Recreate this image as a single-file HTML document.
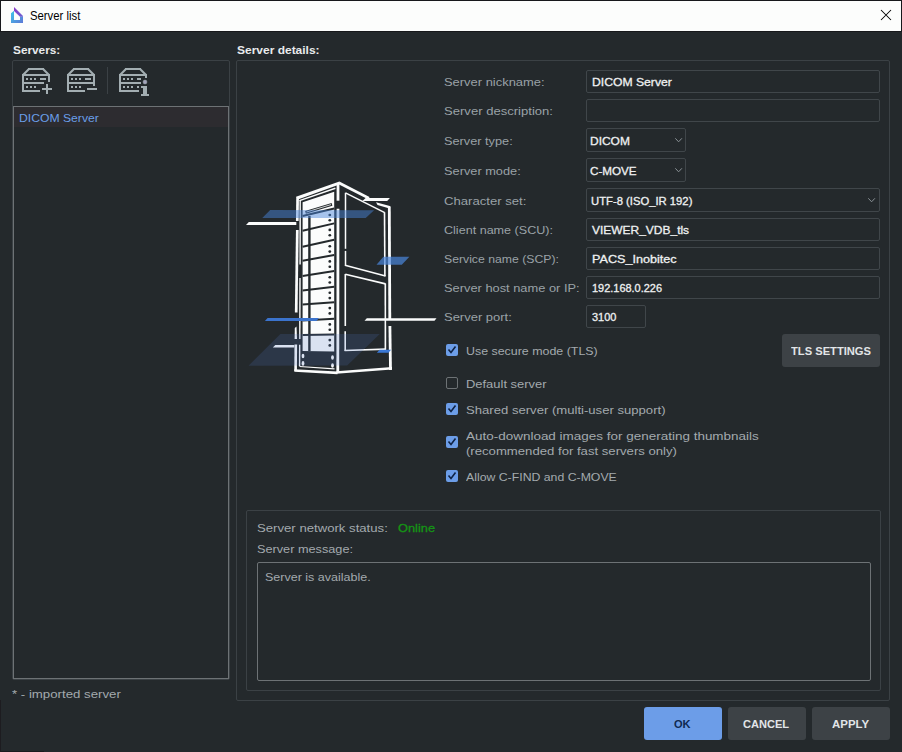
<!DOCTYPE html>
<html><head><meta charset="utf-8"><style>
html,body{margin:0;padding:0;}
body{width:902px;height:752px;position:relative;overflow:hidden;background:#24292c;font-family:'Liberation Sans', sans-serif;}
.a{position:absolute;box-sizing:border-box;}
.t{position:absolute;line-height:20px;height:20px;white-space:pre;transform-origin:0 0;}
</style></head><body>
<!-- title bar -->
<div class="a" style="left:0;top:0;width:902px;height:32px;background:#17181b"></div>
<div class="a" style="left:1px;top:1px;width:900px;height:30px;background:#fcfdfc"></div>
<svg class="a" style="left:0;top:0" width="40" height="32" viewBox="0 0 40 32">
<defs><linearGradient id="lg1" x1="0" y1="0" x2="1" y2="1"><stop offset="0" stop-color="#3ec6ea"/><stop offset="1" stop-color="#5d78d6"/></linearGradient>
<linearGradient id="lg2" x1="0" y1="0" x2="1" y2="1"><stop offset="0" stop-color="#8a38c6"/><stop offset="1" stop-color="#6a62d2"/></linearGradient></defs>
<path d="M11 23 L11 13.3 L14 10.8 L14 20 L20 20 L20 16.8 L23 16.8 L23 23 Z" fill="url(#lg1)"/>
<path d="M14 7 L23 16 L23 16.8 L20 16.8 L14 11 Z" fill="url(#lg2)"/>
</svg>
<svg class="a" style="left:876px;top:5px" width="20" height="20" viewBox="0 0 20 20">
<path d="M5 5 L15 15 M15 5 L5 15" stroke="#000" stroke-width="1.05"/>
</svg>

<div class="a" style="left:0;top:751px;width:44px;height:1px;background:#1a1a1e"></div>
<div class="a" style="left:0;top:700px;width:1px;height:52px;background:#1d1c20"></div>
<!-- left panel -->
<div class="a" style="left:12px;top:60px;width:218px;height:620px;border:1px solid #3b4145;border-radius:2px"></div>
<div class="a" style="left:13px;top:106px;width:216px;height:573px;border:1px solid #6d7275;border-top-width:2px"></div>
<div class="a" style="left:14px;top:107px;width:214px;height:20px;background:#2d2c30"></div>
<div class="a" style="left:107px;top:67px;width:1px;height:27px;background:#3b4145"></div>
<svg class="a" style="left:0;top:0" width="170" height="100" viewBox="0 0 170 100"><rect x="22" y="74" width="2" height="18" fill="#a3aeb2"/><rect x="28" y="68" width="16" height="2" fill="#a3aeb2"/><path d="M22.7 75.3 L28.7 69.3 M49.3 75.3 L43.3 69.3" stroke="#a3aeb2" stroke-width="2" fill="none"/><rect x="22" y="74" width="28" height="2" fill="#a3aeb2"/><rect x="48" y="74" width="2" height="8" fill="#a3aeb2"/><rect x="26" y="78" width="2" height="2" fill="#a3aeb2"/><rect x="26" y="86" width="2" height="2" fill="#a3aeb2"/><rect x="30" y="78" width="2" height="2" fill="#a3aeb2"/><rect x="30" y="86" width="2" height="2" fill="#a3aeb2"/><rect x="34" y="78" width="2" height="2" fill="#a3aeb2"/><rect x="34" y="86" width="2" height="2" fill="#a3aeb2"/><rect x="40" y="78" width="6" height="2" fill="#a3aeb2"/><rect x="23" y="82" width="21" height="2" fill="#a3aeb2"/><rect x="22" y="90" width="18" height="2" fill="#a3aeb2"/><rect x="42" y="88" width="10" height="2" fill="#a3aeb2"/><rect x="46" y="84" width="2" height="10" fill="#a3aeb2"/><rect x="67" y="74" width="2" height="18" fill="#a3aeb2"/><rect x="73" y="68" width="16" height="2" fill="#a3aeb2"/><path d="M67.7 75.3 L73.7 69.3 M94.3 75.3 L88.3 69.3" stroke="#a3aeb2" stroke-width="2" fill="none"/><rect x="67" y="74" width="28" height="2" fill="#a3aeb2"/><rect x="93" y="74" width="2" height="12" fill="#a3aeb2"/><rect x="71" y="78" width="2" height="2" fill="#a3aeb2"/><rect x="71" y="86" width="2" height="2" fill="#a3aeb2"/><rect x="75" y="78" width="2" height="2" fill="#a3aeb2"/><rect x="75" y="86" width="2" height="2" fill="#a3aeb2"/><rect x="79" y="78" width="2" height="2" fill="#a3aeb2"/><rect x="79" y="86" width="2" height="2" fill="#a3aeb2"/><rect x="85" y="78" width="6" height="2" fill="#a3aeb2"/><rect x="68" y="82" width="26" height="2" fill="#a3aeb2"/><rect x="67" y="90" width="18" height="2" fill="#a3aeb2"/><rect x="87" y="88" width="10" height="2" fill="#a3aeb2"/><rect x="119" y="74" width="2" height="18" fill="#a3aeb2"/><rect x="125" y="68" width="16" height="2" fill="#a3aeb2"/><path d="M119.7 75.3 L125.7 69.3 M146.3 75.3 L140.3 69.3" stroke="#a3aeb2" stroke-width="2" fill="none"/><rect x="119" y="74" width="28" height="2" fill="#a3aeb2"/><rect x="145" y="74" width="2" height="4" fill="#a3aeb2"/><rect x="123" y="78" width="2" height="2" fill="#a3aeb2"/><rect x="123" y="86" width="2" height="2" fill="#a3aeb2"/><rect x="127" y="78" width="2" height="2" fill="#a3aeb2"/><rect x="127" y="86" width="2" height="2" fill="#a3aeb2"/><rect x="131" y="78" width="2" height="2" fill="#a3aeb2"/><rect x="131" y="86" width="2" height="2" fill="#a3aeb2"/><rect x="137" y="78" width="4" height="2" fill="#a3aeb2"/><rect x="137" y="86" width="2" height="2" fill="#a3aeb2"/><rect x="120" y="82" width="21" height="2" fill="#a3aeb2"/><rect x="119" y="90" width="20" height="2" fill="#a3aeb2"/><rect x="143" y="86" width="4" height="9" fill="#a3aeb2"/><rect x="141" y="86" width="2" height="2" fill="#a3aeb2"/><rect x="141" y="94" width="8" height="2" fill="#a3aeb2"/><circle cx="145" cy="82" r="1.9" fill="#a4a3bd" stroke="#a3aeb2" stroke-width="0.6"/></svg>

<!-- details box -->
<div class="a" style="left:236px;top:60px;width:654px;height:641px;border:1px solid #3b4145;border-radius:2px"></div>
<!-- inputs -->
<div class="a" style="left:586px;top:70px;width:294px;height:23px;border:1px solid #40464a;border-radius:2px"></div>
<div class="a" style="left:586px;top:99px;width:294px;height:23px;border:1px solid #40464a;border-radius:2px"></div>
<div class="a" style="left:586px;top:128px;width:100px;height:24px;border:1px solid #40464a;border-radius:2px"></div>
<div class="a" style="left:586px;top:158px;width:100px;height:24px;border:1px solid #40464a;border-radius:2px"></div>
<div class="a" style="left:586px;top:188px;width:294px;height:24px;border:1px solid #40464a;border-radius:2px"></div>
<div class="a" style="left:586px;top:218px;width:294px;height:23px;border:1px solid #40464a;border-radius:2px"></div>
<div class="a" style="left:586px;top:247px;width:294px;height:23px;border:1px solid #40464a;border-radius:2px"></div>
<div class="a" style="left:586px;top:276px;width:294px;height:23px;border:1px solid #40464a;border-radius:2px"></div>
<div class="a" style="left:586px;top:305px;width:60px;height:23px;border:1px solid #40464a;border-radius:2px"></div>
<svg class="a" style="left:0;top:0" width="902" height="752" viewBox="0 0 902 752" fill="none" stroke="#8a9196" stroke-width="1">
  <path d="M675.3 138.3 L678.6 141.8 L681.9 138.3"/>
  <path d="M675.3 168.3 L678.6 171.8 L681.9 168.3"/>
  <path d="M868.3 198.3 L871.6 201.8 L874.9 198.3"/>
</svg>

<!-- checkboxes -->
<div class="a" style="left:446px;top:344px;width:12px;height:12px;background:#6c9de8;border-radius:2px"></div>
<div class="a" style="left:446px;top:377px;width:12px;height:12px;border:1px solid #6d7275;border-radius:2px"></div>
<div class="a" style="left:446px;top:403px;width:12px;height:12px;background:#6c9de8;border-radius:2px"></div>
<div class="a" style="left:446px;top:436px;width:12px;height:12px;background:#6c9de8;border-radius:2px"></div>
<div class="a" style="left:446px;top:470px;width:12px;height:12px;background:#6c9de8;border-radius:2px"></div>
<svg class="a" style="left:0;top:0" width="902" height="752" viewBox="0 0 902 752" fill="none" stroke="#0f2345" stroke-width="1.6">
  <path d="M448.5 349.5 L451 352.5 L455.5 346.5"/>
  <path d="M448.5 408.5 L451 411.5 L455.5 405.5"/>
  <path d="M448.5 441.5 L451 444.5 L455.5 438.5"/>
  <path d="M448.5 475.5 L451 478.5 L455.5 472.5"/>
</svg>

<!-- TLS button -->
<div class="a" style="left:782px;top:334px;width:98px;height:33px;background:#3d4246;border-radius:3px"></div>

<!-- status box -->
<div class="a" style="left:246px;top:510px;width:635px;height:181px;border:1px solid #3b4145;border-radius:2px"></div>
<div class="a" style="left:257px;top:562px;width:614px;height:119px;border:1px solid #6d7275;border-radius:2px"></div>

<!-- buttons -->
<div class="a" style="left:644px;top:707px;width:78px;height:33px;background:#6c9de8;border-radius:3px"></div>
<div class="a" style="left:728px;top:707px;width:78px;height:33px;background:#3d4246;border-radius:3px"></div>
<div class="a" style="left:812px;top:707px;width:78px;height:33px;background:#3d4246;border-radius:3px"></div>

<!-- illustration -->
<svg class="a" style="left:0;top:0" width="902" height="752" viewBox="0 0 902 752">
<polygon points="302.6,202.3 334.2,191.8 334.2,351.5 302.6,351.0" fill="#fbfcfc" />
<polygon points="302.6,351.8 334.2,352.3 334.2,370.0 302.6,368.0" fill="#24292c" />
<line x1="302.6" y1="216" x2="334.2" y2="208.5" stroke="#24292c" stroke-width="2.0" />
<line x1="302.6" y1="230.7" x2="334.2" y2="223.4" stroke="#24292c" stroke-width="2.0" />
<line x1="302.6" y1="246.8" x2="334.2" y2="239.8" stroke="#24292c" stroke-width="2.0" />
<line x1="302.6" y1="260.7" x2="334.2" y2="255.1" stroke="#24292c" stroke-width="2.0" />
<line x1="302.6" y1="276.1" x2="334.2" y2="271" stroke="#24292c" stroke-width="2.0" />
<line x1="302.6" y1="290.5" x2="334.2" y2="286.8" stroke="#24292c" stroke-width="2.0" />
<line x1="302.6" y1="304.6" x2="334.2" y2="302.3" stroke="#24292c" stroke-width="2.0" />
<line x1="302.6" y1="320.4" x2="334.2" y2="318.7" stroke="#24292c" stroke-width="2.0" />
<line x1="302.6" y1="335.1" x2="334.2" y2="334.5" stroke="#24292c" stroke-width="2.0" />
<line x1="309.4" y1="216" x2="309.4" y2="351" stroke="#24292c" stroke-width="2.4" />
<line x1="305.5" y1="212.3" x2="332" y2="204.3" stroke="#24292c" stroke-width="2.8" />
<line x1="306.5" y1="212" x2="331" y2="204.6" stroke="#fbfcfc" stroke-width="0.8" />
<ellipse cx="329.8" cy="215.0" rx="1.4" ry="1.3" fill="#24292c"/>
<ellipse cx="329.8" cy="220.3" rx="1.4" ry="1.3" fill="#24292c"/>
<ellipse cx="329.8" cy="229.9" rx="1.4" ry="1.3" fill="#24292c"/>
<ellipse cx="329.8" cy="235.2" rx="1.4" ry="1.3" fill="#24292c"/>
<ellipse cx="329.8" cy="246.3" rx="1.4" ry="1.3" fill="#24292c"/>
<ellipse cx="329.8" cy="251.6" rx="1.4" ry="1.3" fill="#24292c"/>
<ellipse cx="329.8" cy="261.4" rx="1.4" ry="1.3" fill="#24292c"/>
<ellipse cx="329.8" cy="266.7" rx="1.4" ry="1.3" fill="#24292c"/>
<ellipse cx="329.8" cy="277.2" rx="1.4" ry="1.3" fill="#24292c"/>
<ellipse cx="329.8" cy="282.5" rx="1.4" ry="1.3" fill="#24292c"/>
<ellipse cx="329.8" cy="292.8" rx="1.4" ry="1.3" fill="#24292c"/>
<ellipse cx="329.8" cy="298.1" rx="1.4" ry="1.3" fill="#24292c"/>
<ellipse cx="329.8" cy="308.1" rx="1.4" ry="1.3" fill="#24292c"/>
<ellipse cx="329.8" cy="313.4" rx="1.4" ry="1.3" fill="#24292c"/>
<ellipse cx="329.8" cy="324.4" rx="1.4" ry="1.3" fill="#24292c"/>
<ellipse cx="329.8" cy="329.7" rx="1.4" ry="1.3" fill="#24292c"/>
<ellipse cx="329.8" cy="340.1" rx="1.4" ry="1.3" fill="#24292c"/>
<ellipse cx="329.8" cy="345.4" rx="1.4" ry="1.3" fill="#24292c"/>
<ellipse cx="303" cy="356" rx="1.4" ry="2.3" fill="#fbfcfc"/>
<ellipse cx="303" cy="363.4" rx="1.4" ry="2.3" fill="#fbfcfc"/>
<ellipse cx="332.5" cy="357.5" rx="1.4" ry="2.3" fill="#fbfcfc"/>
<ellipse cx="332.5" cy="365.5" rx="1.4" ry="2.3" fill="#fbfcfc"/>
<polygon points="296.0,196.8 339.4,181.4 339.4,184.4 298.6,199.2" fill="#fbfcfc" />
<line x1="297.6" y1="197" x2="297.3" y2="221.1" stroke="#fbfcfc" stroke-width="2.7" />
<line x1="297.3" y1="229.9" x2="296.2" y2="312.6" stroke="#fbfcfc" stroke-width="2.7" />
<polygon points="294.6,339.0 294.8,328.0 296.5,326.4 297.0,339.0" fill="#fbfcfc" />
<line x1="295.8" y1="344.6" x2="295.6" y2="371" stroke="#fbfcfc" stroke-width="2.6" />
<line x1="300.2" y1="200" x2="300.1" y2="264.5" stroke="#fbfcfc" stroke-width="1.4" />
<line x1="300" y1="278" x2="299.8" y2="339" stroke="#fbfcfc" stroke-width="1.4" />
<line x1="299.7" y1="344.7" x2="299.6" y2="366.2" stroke="#fbfcfc" stroke-width="1.4" />
<line x1="299.5" y1="200.6" x2="335.4" y2="188.3" stroke="#fbfcfc" stroke-width="1.5" />
<line x1="338" y1="183" x2="338" y2="200.7" stroke="#fbfcfc" stroke-width="2.8" />
<line x1="338" y1="208.7" x2="337.8" y2="373" stroke="#fbfcfc" stroke-width="2.8" />
<polygon points="294.3,369.3 337.5,371.6 337.5,374.2 294.3,371.8" fill="#fbfcfc" />
<polygon points="336.5,371.2 392.0,367.0 392.0,369.6 336.5,373.8" fill="#fbfcfc" />
<line x1="299.6" y1="366.5" x2="334.5" y2="368.8" stroke="#fbfcfc" stroke-width="1.2" />
<polygon points="339.4,181.4 369.5,197.0 368.5,199.4 338.5,184.2" fill="#fbfcfc" />
<polygon points="362.5,201.1 365.6,198.0 389.9,198.0 387.2,201.1" fill="#fbfcfc" />
<polygon points="376.0,202.3 390.7,206.2 389.5,208.6 377.5,205.0" fill="#fbfcfc" />
<line x1="389.3" y1="207" x2="389.8" y2="320" stroke="#fbfcfc" stroke-width="2.8" />
<line x1="389.9" y1="326" x2="390.5" y2="370" stroke="#fbfcfc" stroke-width="2.8" />
<line x1="345.5" y1="192.8" x2="345.5" y2="248.8" stroke="#fbfcfc" stroke-width="1.5" />
<line x1="345.5" y1="250.9" x2="345.5" y2="266" stroke="#fbfcfc" stroke-width="1.5" />
<line x1="345.5" y1="192.8" x2="384.7" y2="212.7" stroke="#fbfcfc" stroke-width="1.5" />
<line x1="384.5" y1="212.2" x2="384.9" y2="276.3" stroke="#fbfcfc" stroke-width="1.6" />
<line x1="345" y1="265.3" x2="385.5" y2="276" stroke="#fbfcfc" stroke-width="1.6" />
<line x1="345.3" y1="274.3" x2="385.5" y2="283.9" stroke="#fbfcfc" stroke-width="1.6" />
<line x1="345.3" y1="274" x2="345.3" y2="326" stroke="#fbfcfc" stroke-width="1.6" />
<line x1="345.2" y1="331.2" x2="345.2" y2="351" stroke="#fbfcfc" stroke-width="1.6" />
<line x1="385.3" y1="283.6" x2="385.4" y2="349.8" stroke="#fbfcfc" stroke-width="1.6" />
<line x1="344.6" y1="350.5" x2="386" y2="349.2" stroke="#fbfcfc" stroke-width="1.7" />
<polygon points="246.0,225.1 248.8,222.0 296.3,222.0 296.3,225.1" fill="#fbfcfc" />
<polygon points="272.8,347.4 275.3,345.0 294.3,345.0 294.3,347.4" fill="#fbfcfc" />
<polygon points="364.5,320.8 366.8,318.3 436.5,318.3 434.5,320.8" fill="#fbfcfc" />
<polygon points="262.3,218.0 270.2,210.0 374.1,210.2 365.7,218.0" fill="#4a86dc" fill-opacity="0.48"/>
<polygon points="376.5,264.7 383.4,256.7 409.4,256.8 401.8,264.8" fill="#4a86dc" fill-opacity="0.7"/>
<polygon points="264.9,320.9 267.6,318.0 319.0,318.0 316.5,320.9" fill="#3b73cc" />
<polygon points="376.9,352.7 379.7,349.8 391.0,349.8 388.5,352.7" fill="#3a78d6" />
<polygon points="248.5,365.8 280.4,334.0 379.8,333.9 347.2,365.6" fill="#5276c5" fill-opacity="0.19"/>

</svg>

<div class="t" style="left:30.0px;top:6.0px;font-size:12px;color:#000000;transform:scaleX(0.9429);">Server list</div><div class="t" style="left:12.8px;top:40.3px;font-size:11.4px;font-weight:bold;color:#e9ebec;transform:scaleX(1.0371);">Servers:</div><div class="t" style="left:237.0px;top:40.2px;font-size:11.4px;font-weight:bold;color:#e9ebec;transform:scaleX(1.0520);">Server details:</div><div class="t" style="left:19.0px;top:108.0px;font-size:11.3px;color:#6a9fe9;transform:scaleX(1.0772);">DICOM Server</div><div class="t" style="left:444.0px;top:72.0px;font-size:11.3px;color:#9aa2a7;transform:scaleX(1.1444);">Server nickname:</div><div class="t" style="left:444.0px;top:101.0px;font-size:11.3px;color:#9aa2a7;transform:scaleX(1.1573);">Server description:</div><div class="t" style="left:444.0px;top:131.0px;font-size:11.3px;color:#9aa2a7;transform:scaleX(1.1280);">Server type:</div><div class="t" style="left:444.0px;top:161.0px;font-size:11.3px;color:#9aa2a7;transform:scaleX(1.1311);">Server mode:</div><div class="t" style="left:444.0px;top:191.0px;font-size:11.3px;color:#9aa2a7;transform:scaleX(1.1613);">Character set:</div><div class="t" style="left:444.0px;top:220.0px;font-size:11.3px;color:#9aa2a7;transform:scaleX(1.1130);">Client name (SCU):</div><div class="t" style="left:444.0px;top:249.0px;font-size:11.3px;color:#9aa2a7;transform:scaleX(1.0828);">Service name (SCP):</div><div class="t" style="left:444.0px;top:278.0px;font-size:11.3px;color:#9aa2a7;transform:scaleX(1.1367);">Server host name or IP:</div><div class="t" style="left:444.0px;top:307.0px;font-size:11.3px;color:#9aa2a7;transform:scaleX(1.1485);">Server port:</div><div class="t" style="left:592.3px;top:72.0px;font-size:11px;color:#eef0f1;transform:scaleX(1.1064);-webkit-text-stroke:0.3px #eef0f1;">DICOM Server</div><div class="t" style="left:590.3px;top:131.0px;font-size:11px;color:#eef0f1;transform:scaleX(1.0880);-webkit-text-stroke:0.3px #eef0f1;">DICOM</div><div class="t" style="left:590.3px;top:161.0px;font-size:11px;color:#eef0f1;transform:scaleX(1.0591);-webkit-text-stroke:0.3px #eef0f1;">C-MOVE</div><div class="t" style="left:590.6px;top:190.5px;font-size:11px;color:#eef0f1;transform:scaleX(1.0239);-webkit-text-stroke:0.3px #eef0f1;">UTF-8 (ISO_IR 192)</div><div class="t" style="left:592.3px;top:220.0px;font-size:11px;color:#eef0f1;transform:scaleX(1.0880);-webkit-text-stroke:0.3px #eef0f1;">VIEWER_VDB_tls</div><div class="t" style="left:592.3px;top:249.0px;font-size:11px;color:#eef0f1;transform:scaleX(1.1477);-webkit-text-stroke:0.3px #eef0f1;">PACS_Inobitec</div><div class="t" style="left:591.9px;top:278.0px;font-size:11px;color:#eef0f1;transform:scaleX(0.9949);-webkit-text-stroke:0.3px #eef0f1;">192.168.0.226</div><div class="t" style="left:591.8px;top:306.5px;font-size:11px;color:#eef0f1;transform:scaleX(0.9966);-webkit-text-stroke:0.3px #eef0f1;">3100</div><div class="t" style="left:466.2px;top:341.0px;font-size:11.3px;color:#a3aaae;transform:scaleX(1.0982);">Use secure mode (TLS)</div><div class="t" style="left:466.2px;top:374.0px;font-size:11.3px;color:#a3aaae;transform:scaleX(1.1446);">Default server</div><div class="t" style="left:466.2px;top:400.0px;font-size:11.3px;color:#a3aaae;transform:scaleX(1.1597);">Shared server (multi-user support)</div><div class="t" style="left:466.2px;top:426.0px;font-size:11.3px;color:#a3aaae;transform:scaleX(1.1924);">Auto-download images for generating thumbnails</div><div class="t" style="left:466.2px;top:441.0px;font-size:11.3px;color:#a3aaae;transform:scaleX(1.1628);">(recommended for fast servers only)</div><div class="t" style="left:466.2px;top:467.0px;font-size:11.3px;color:#a3aaae;transform:scaleX(1.0870);">Allow C-FIND and C-MOVE</div><div class="t" style="left:791.0px;top:341.0px;font-size:11.2px;font-weight:bold;color:#e2e5e8;transform:scaleX(0.9977);">TLS SETTINGS</div><div class="t" style="left:257.1px;top:518.0px;font-size:11.3px;color:#a3aaae;transform:scaleX(1.1638);">Server network status:</div><div class="t" style="left:397.5px;top:518.0px;font-size:11.3px;color:#159515;transform:scaleX(1.1330);-webkit-text-stroke:0.3px #159515;">Online</div><div class="t" style="left:257.1px;top:539.0px;font-size:11.3px;color:#a3aaae;transform:scaleX(1.1242);">Server message:</div><div class="t" style="left:265.1px;top:567.0px;font-size:11.3px;color:#a3aaae;transform:scaleX(1.1073);">Server is available.</div><div class="t" style="left:11.6px;top:683.5px;font-size:11.3px;color:#a3aaae;transform:scaleX(1.1709);">* - imported server</div><div class="t" style="left:674.4px;top:714.0px;font-size:11.2px;font-weight:bold;color:#0f2a52;transform:scaleX(0.9892);">OK</div><div class="t" style="left:743.1px;top:714.0px;font-size:11.2px;font-weight:bold;color:#e2e5e8;transform:scaleX(0.9887);">CANCEL</div><div class="t" style="left:832.0px;top:714.0px;font-size:11.2px;font-weight:bold;color:#e2e5e8;transform:scaleX(1.0226);">APPLY</div>
</body></html>
